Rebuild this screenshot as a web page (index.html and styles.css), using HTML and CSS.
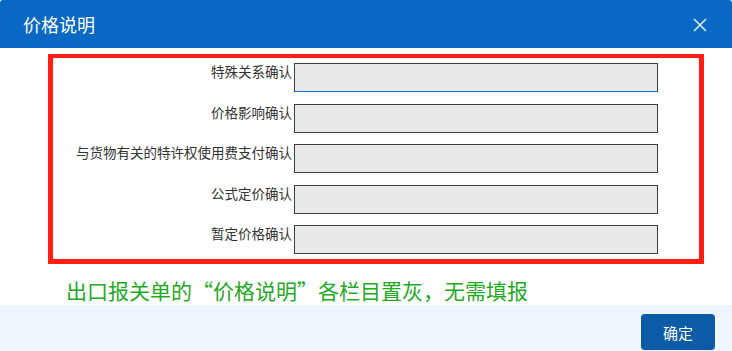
FILE: index.html
```html
<!DOCTYPE html>
<html lang="zh">
<head>
<meta charset="utf-8">
<link rel="stylesheet" href="styles.css">
</head>
<body>
<div class="modal">
  <div class="modal-header">
    <span class="modal-title">价格说明</span>
    <svg class="close" width="14" height="14" viewBox="0 0 14 14"><path d="M1 1 L13 13 M13 1 L1 13" stroke="#dfe9f5" stroke-width="1.6" fill="none"/></svg>
  </div>
  <div class="modal-body">
    <div class="highlight">
      <div class="row"><label class="lbl">特殊关系确认</label><div class="field focused"></div></div>
      <div class="row"><label class="lbl">价格影响确认</label><div class="field"></div></div>
      <div class="row"><label class="lbl">与货物有关的特许权使用费支付确认</label><div class="field"></div></div>
      <div class="row"><label class="lbl">公式定价确认</label><div class="field"></div></div>
      <div class="row"><label class="lbl">暂定价格确认</label><div class="field"></div></div>
    </div>
    <p class="note">出口报关单的“价格说明”各栏目置灰，无需填报</p>
  </div>
  <div class="modal-footer">
    <button class="btn">确定</button>
  </div>
</div>
</body>
</html>
```

FILE: styles.css
```css
html, body {
  margin: 0;
  padding: 0;
  background: #ffffff;
  font-family: "Noto Sans CJK SC", "Microsoft YaHei", sans-serif;
}
.modal {
  width: 732px;
  height: 351px;
  overflow: hidden;
  display: flex;
  flex-direction: column;
}
.modal-header {
  height: 48px;
  flex: none;
  background: #0a68c5;
  border-radius: 3px 3px 0 0;
  display: flex;
  align-items: center;
  justify-content: space-between;
  padding: 0 25px 0 23px;
}
.modal-title {
  color: #ffffff;
  font-size: 18px;
  line-height: 24px;
}
.close {
  display: block;
  margin-top: 2px;
}
.modal-body {
  height: 257px;
  flex: none;
  background: #ffffff;
  padding: 6px 0 0 48px;
  box-sizing: border-box;
}
.highlight {
  width: 656px;
  height: 210px;
  box-sizing: border-box;
  border: 5px solid #fe1e14;
  border-top-width: 4px;
  padding-top: 5px;
  display: flex;
  flex-direction: column;
  gap: 11.5px;
}
.row {
  display: flex;
  align-items: flex-start;
}
.lbl {
  width: 241px;
  padding-right: 2px;
  box-sizing: border-box;
  text-align: right;
  font-size: 13.5px;
  line-height: 16px;
  color: #333333;
  white-space: nowrap;
}
.field {
  width: 364px;
  height: 29px;
  box-sizing: border-box;
  border: 1px solid #3d3d3d;
  background: #e9e9e9;
}
.field.focused {
  border-bottom-color: #1a6fc9;
}
.note {
  margin: 13px 0 0 18px;
  font-size: 21px;
  line-height: 26px;
  color: #1faa1f;
}
.modal-footer {
  flex: 1;
  background: #eef5fd;
  display: flex;
  justify-content: flex-end;
  align-items: flex-start;
  padding: 9px 17px 0 0;
}
.btn {
  width: 74px;
  height: 36px;
  border: none;
  border-radius: 4px;
  background: #0b5ba6;
  color: #ffffff;
  font-family: inherit;
  font-size: 15px;
  padding: 0;
}
```
